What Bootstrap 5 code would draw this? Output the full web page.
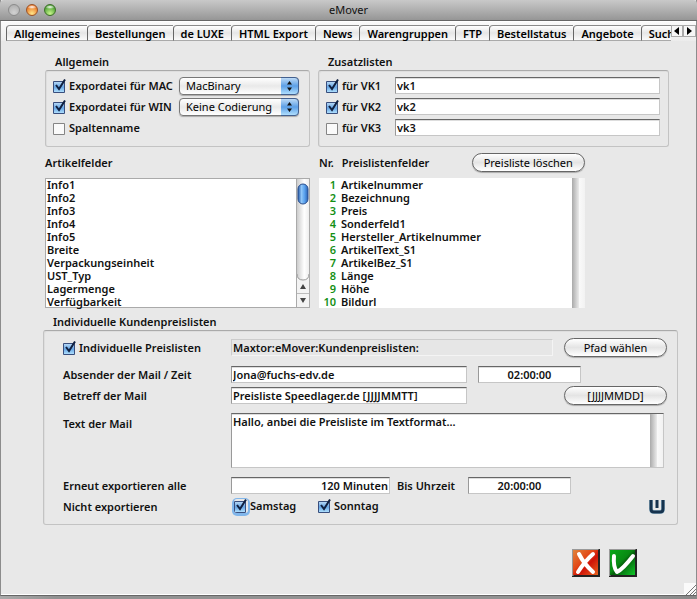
<!DOCTYPE html>
<html lang="de">
<head>
<meta charset="utf-8">
<meta name="viewport" content="width=device-width, initial-scale=1">
<title>eMover</title>
<link href="https://cdn.jsdelivr.net/npm/bootstrap@5.3.0/dist/css/bootstrap.min.css" rel="stylesheet">
<style>
body { font: 600 11px/13px "Noto Sans", "Open Sans", sans-serif; color: #111; background: linear-gradient(90deg, #aaa, #929292 8%, #929292 92%, #888); min-height: 100vh; }
button, input, select, textarea { font: inherit; color: inherit; }
h2, label { font: inherit; margin: 0; white-space: nowrap; }
label { padding-left: 2px; }
.app-window { background: #e8e8e8; border: 1px solid #8c8c8c; border-top: 0; border-bottom-color: #666; min-height: calc(100vh - 3px); box-shadow: inset 0 -1px #fff; }
.title-bar { height: 21px; margin: 0 -1px; background: linear-gradient(#c9c9c9, #969696); border-bottom: 1px solid #666; border-radius: 4px 4px 0 0; padding-left: 8px; }
.title-bar h1 { font: 400 11px/20px "Noto Sans", sans-serif; margin: 0; padding-right: 56px; }
.lamps { gap: 6px; }
.lamp { width: 12px; height: 12px; padding: 0; border: 1px solid #8b8b8b; border-radius: 50%; background: radial-gradient(circle at 50% 75%, #d2d2d2, #a9a9a9); }
.lamp-min { border-color: #9b5226; background: radial-gradient(ellipse 5px 2px at 50% 20%, #fff, transparent), radial-gradient(circle at 50% 85%, #ffe78a, #e97525 75%); }
.lamp-max { border-color: #3d6e28; background: radial-gradient(ellipse 5px 2px at 50% 20%, #fff, transparent), radial-gradient(circle at 50% 85%, #c8f58c, #4a9e32 75%); }
.tab-strip { height: 20px; padding: 3px 0 0 5px; border-top: 1px solid #fff; background: linear-gradient(#fafafa, #ececec); }
.tab-strip .nav { overflow: hidden; min-width: 0; }
.tab-strip .nav-link { height: 16px; padding: 0 7px; line-height: 15px; color: #000; white-space: nowrap; border: 1px solid #8a8a8a; border-left-color: #666; border-bottom-color: #aaa; border-right: 0; border-radius: 4px 0 0 0; background: linear-gradient(#fff, #e6e6e6 50%, #fafafa); }
.scroll-btn { width: 13px; height: 12px; padding: 0; border: 1px solid #aaa; background: #f6f6f6; line-height: 0; }
.panes { padding: 14px 18px 0 42px; }
.sec-head { padding: 0 0 2px 10px; }
.upper, .lists { display: grid; grid-template-columns: 265fr 351fr; column-gap: 8px; margin: 0 9px 0 2px; }
.group-box { border: 1px solid #c3c3c3; border-top-color: #aaa; border-radius: 3px; box-shadow: inset 1px 1px #dedede; }
.small-group { height: 77px; padding: 4px 8px 0 7px; }
.opt-row { height: 21px; }
.tick { appearance: none; flex: none; width: 14px; height: 14px; margin: 0; background: url("data:image/svg+xml,%3Csvg xmlns='http://www.w3.org/2000/svg' viewBox='0 0 14 14'%3E%3Cpath d='M.5 2.5h11v11H.5z' fill='%23fafafa' stroke='%23858585'/%3E%3C/svg%3E") center/contain no-repeat; }
.tick:checked { background-image: url("data:image/svg+xml,%3Csvg xmlns='http://www.w3.org/2000/svg' viewBox='0 0 14 14'%3E%3Cdefs%3E%3ClinearGradient id='a' x2='0' y2='1'%3E%3Cstop stop-color='%23bcdcf7'/%3E%3Cstop offset='.5' stop-color='%2365a5e5'/%3E%3Cstop offset='1' stop-color='%23b5e4ff'/%3E%3C/linearGradient%3E%3C/defs%3E%3Cpath d='M.5 2.5h11v11H.5z' fill='url(%23a)' stroke='%23394e7d'/%3E%3Cpath d='m3 6 3 4 6-9.500' fill='none' stroke='%23102040' stroke-width='2'/%3E%3C/svg%3E"); }
.tick-focus { border-radius: 3px; box-shadow: 0 1px 0 2px #80b6eb; }
.mac-select { position: relative; width: 120px; margin-right: 2px; }
.mac-select select { appearance: none; width: 100%; height: 18px; padding: 0 22px 0 6px; font-weight: 400; line-height: 15px; color: #000; border: 1px solid #777; border-radius: 4px; background: linear-gradient(#fff, #e9e9e9 50%, #fff); box-shadow: 0 1px 1px #aaa; }
.mac-select svg { position: absolute; right: 0; top: 0; pointer-events: none; }
.vk-name { width: 55px; flex: none; }
.field { height: 17px; min-width: 0; padding: 0 1px; line-height: 14px; border: 1px solid #c6c6c6; border-top-color: #666; border-left-color: #999; border-radius: 0; background: #fff; box-shadow: inset 0 1px #ddd; }
.field-path { background: #e6e6e6; border-color: #ccc; border-bottom-color: #f4f4f4; border-right-color: #f4f4f4; box-shadow: none; }
.pill { height: 19px; padding: 0 11px; font-weight: 400; line-height: 16px; color: #000; white-space: nowrap; border: 1px solid #666; border-radius: 10px; background: linear-gradient(#fff, #e4e4e4 50%, #fff); box-shadow: 0 1px 1px #aaa; }
.pill-fixed { width: 103px; flex: none; padding: 0; margin-left: 11px; }
.date-btn { margin-left: 97px; }
.list-head { height: 31px; }
.list-pane { height: 130px; background: #fff; }
.list-left { box-shadow: inset 0 0 0 1px #aaa; }
.list-left li { padding-left: 2px; }
.v-scroll { width: 14px; line-height: 0; border: 1px solid #aaa; background: linear-gradient(90deg, #ccc, #fff 60%, #eee); }
.price-table td { padding: 0; }
.price-table td:first-child { width: 22px; padding-right: 5px; text-align: right; color: #149014; }
.idle-scroll { width: 13px; flex: none; background: linear-gradient(90deg, #aaa, #e6e6e6 50%, #fafafa 51%, #f2f2f2); }
.right-list { width: 76%; padding-left: 1px; }
.sub-section { padding-top: 7px; }
.mail-group { padding: 7px 10px 9px 19px; }
.mail-row { min-height: 18px; margin-bottom: 8px; }
.mail-row.tight { margin-bottom: 3px; }
.mail-row:last-child { margin-bottom: 0; }
.row-name { width: 168px; flex: none; padding: 0; }
.time-field { width: 103px; flex: none; text-align: center; }
.mail-time { margin: 0 86px 0 11px; }
.until-time { margin-right: 96px; }
.until-name { width: 78px; flex: none; padding-left: 7px; }
.mail-text { height: 55px; padding: 0; margin-right: 3px; }
.mail-text textarea { resize: none; border: 0; padding: 1px; background: transparent; height: 52px; overflow: hidden; min-width: 0; outline: 0; }
.day-box { width: 84px; padding-left: 3px; }
.img-btn { width: 28px; height: 28px; padding: 0; border: 0; background: none; line-height: 0; }
.actions { padding: 24px 41px 0 0; gap: 9px; }
.grip { line-height: 0; }
</style>
<script src="https://cdn.jsdelivr.net/npm/bootstrap@5.3.0/dist/js/bootstrap.bundle.min.js"></script>
</head>
<body>
<div class="app-window d-flex flex-column">
  <header class="title-bar d-flex align-items-center">
    <div class="lamps d-flex">
      <button class="lamp" aria-label="Schließen"></button>
      <button class="lamp lamp-min" aria-label="Minimieren"></button>
      <button class="lamp lamp-max" aria-label="Maximieren"></button>
    </div>
    <h1 class="flex-fill text-center">eMover</h1>
  </header>
  <div class="tab-strip d-flex">
    <nav class="nav flex-nowrap flex-fill">
      <a class="nav-link active" href="#">Allgemeines</a>
      <a class="nav-link" href="#">Bestellungen</a>
      <a class="nav-link" href="#">de LUXE</a>
      <a class="nav-link" href="#">HTML Export</a>
      <a class="nav-link" href="#">News</a>
      <a class="nav-link" href="#">Warengruppen</a>
      <a class="nav-link" href="#">FTP</a>
      <a class="nav-link" href="#">Bestellstatus</a>
      <a class="nav-link" href="#">Angebote</a>
      <a class="nav-link" href="#">Suche</a>
    </nav>
    <button class="scroll-btn" aria-label="Zurück"><svg width="9" height="10"><path d="M7 1v8L2 5z"/></svg></button>
    <button class="scroll-btn" aria-label="Weiter"><svg width="9" height="10"><path d="M2 1v8l5-4z"/></svg></button>
  </div>

  <main class="panes">
    <div class="upper">
      <section>
        <h2 class="sec-head">Allgemein</h2>
        <div class="group-box small-group">
          <div class="opt-row d-flex align-items-center">
            <input class="tick" type="checkbox" id="mac" checked><label class="flex-fill" for="mac">Expordatei für MAC</label>
            <div class="mac-select"><select aria-label="Format MAC"><option>MacBinary</option></select><svg width="18" height="18"><use href="#cap"/></svg></div>
          </div>
          <div class="opt-row d-flex align-items-center">
            <input class="tick" type="checkbox" id="win" checked><label class="flex-fill" for="win">Expordatei für WIN</label>
            <div class="mac-select"><select aria-label="Format WIN"><option>Keine Codierung</option></select><svg width="18" height="18"><use href="#cap"/></svg></div>
          </div>
          <div class="opt-row d-flex align-items-center">
            <input class="tick" type="checkbox" id="spalten"><label for="spalten">Spaltenname</label>
          </div>
        </div>
      </section>
      <section>
        <h2 class="sec-head">Zusatzlisten</h2>
        <div class="group-box small-group">
          <div class="opt-row d-flex align-items-center">
            <input class="tick" type="checkbox" id="vk1" checked><label class="vk-name" for="vk1">für VK1</label>
            <input class="field flex-fill" type="text" value="vk1" aria-label="Name VK1">
          </div>
          <div class="opt-row d-flex align-items-center">
            <input class="tick" type="checkbox" id="vk2" checked><label class="vk-name" for="vk2">für VK2</label>
            <input class="field flex-fill" type="text" value="vk2" aria-label="Name VK2">
          </div>
          <div class="opt-row d-flex align-items-center">
            <input class="tick" type="checkbox" id="vk3"><label class="vk-name" for="vk3">für VK3</label>
            <input class="field flex-fill" type="text" value="vk3" aria-label="Name VK3">
          </div>
        </div>
      </section>
    </div>

    <div class="lists">
      <section>
        <div class="list-head d-flex align-items-center"><h2>Artikelfelder</h2></div>
        <div class="list-pane list-left d-flex">
          <ul class="list-unstyled flex-fill m-0">
            <li>Info1</li><li>Info2</li><li>Info3</li><li>Info4</li><li>Info5</li><li>Breite</li><li>Verpackungseinheit</li><li>UST_Typ</li><li>Lagermenge</li><li>Verfügbarkeit</li>
          </ul>
          <div class="v-scroll">
            <svg width="12" height="128">
              <defs><linearGradient id="blue"><stop stop-color="#2459a8"/><stop offset=".35" stop-color="#8fc6f8"/><stop offset=".65" stop-color="#5aa2ee"/><stop offset="1" stop-color="#2a62b4"/></linearGradient></defs>
              <rect x="1" y="5" width="10" height="20" rx="5" fill="url(#blue)" stroke="#2b4e8c"/>
              <path d="M0 95q0 6 6 6t6-6v33H0z" fill="#f3f3f3"/><path d="M0 95q0 6 6 6t6-6" fill="none" stroke="#999"/>
              <path d="M0 114.500h12" stroke="#bbb"/><path d="M3 110h6l-3-5zM3 119h6l-3 5z" fill="#444"/>
            </svg>
          </div>
        </div>
      </section>
      <section class="right-list">
        <div class="list-head d-flex align-items-center"><h2>Nr.</h2><h2 class="ps-2">Preislistenfelder</h2><button class="pill ms-auto">Preisliste löschen</button></div>
        <div class="list-pane d-flex">
          <div class="flex-fill">
            <table class="price-table w-100" aria-label="Preislistenfelder">
              <tbody>
              <tr><td>1</td><td>Artikelnummer</td></tr>
              <tr><td>2</td><td>Bezeichnung</td></tr>
              <tr><td>3</td><td>Preis</td></tr>
              <tr><td>4</td><td>Sonderfeld1</td></tr>
              <tr><td>5</td><td>Hersteller_Artikelnummer</td></tr>
              <tr><td>6</td><td>ArtikelText_S1</td></tr>
              <tr><td>7</td><td>ArtikelBez_S1</td></tr>
              <tr><td>8</td><td>Länge</td></tr>
              <tr><td>9</td><td>Höhe</td></tr>
              <tr><td>10</td><td>Bildurl</td></tr>
              </tbody>
            </table>
          </div>
          <div class="idle-scroll"></div>
        </div>
      </section>
    </div>

    <section class="sub-section">
      <h2 class="sec-head">Individuelle Kundenpreislisten</h2>
      <div class="group-box mail-group">
        <div class="mail-row d-flex align-items-center">
          <div class="row-name d-flex"><input class="tick" type="checkbox" id="indiv" checked><label for="indiv">Individuelle Preislisten</label></div>
          <input class="field field-path flex-fill" type="text" value="Maxtor:eMover:Kundenpreislisten:" aria-label="Pfad" readonly>
          <button class="pill pill-fixed">Pfad wählen</button>
        </div>
        <div class="mail-row tight d-flex align-items-center">
          <label class="row-name" for="absender">Absender der Mail / Zeit</label>
          <input class="field flex-fill" type="text" id="absender" value="Jona@fuchs-edv.de">
          <input class="field time-field mail-time" type="text" value="02:00:00" aria-label="Zeit">
        </div>
        <div class="mail-row d-flex align-items-center">
          <label class="row-name" for="betreff">Betreff der Mail</label>
          <input class="field flex-fill" type="text" id="betreff" value="Preisliste Speedlager.de [JJJJMMTT]">
          <button class="pill pill-fixed date-btn">[JJJJMMDD]</button>
        </div>
        <div class="mail-row d-flex">
          <label class="row-name pt-1" for="mailtext">Text der Mail</label>
          <div class="field mail-text flex-fill d-flex"><textarea class="flex-fill" id="mailtext">Hallo, anbei die Preisliste im Textformat...</textarea><div class="idle-scroll"></div></div>
        </div>
        <div class="mail-row tight d-flex align-items-center">
          <label class="row-name" for="erneut">Erneut exportieren alle</label>
          <input class="field flex-fill text-end" type="text" id="erneut" value="120 Minuten">
          <label class="until-name" for="bis">Bis Uhrzeit</label>
          <input class="field time-field until-time" type="text" id="bis" value="20:00:00">
        </div>
        <div class="mail-row d-flex align-items-center">
          <div class="row-name">Nicht exportieren</div>
          <div class="d-flex day-box"><input class="tick tick-focus" type="checkbox" id="sa" checked><label for="sa">Samstag</label></div>
          <div class="d-flex day-box"><input class="tick" type="checkbox" id="so" checked><label for="so">Sonntag</label></div>
          <svg class="ms-auto" width="18" height="15"><path d="M2 1v9q0 3 3 3h6q3 0 3-3V1" fill="none" stroke="#9fc0d2" stroke-width="4"/><path d="M2 1v9q0 3 3 3h6q3 0 3-3V1M8 1v8" fill="none" stroke="#17334e" stroke-width="3"/></svg>
        </div>
      </div>
    </section>
    <div class="actions d-flex justify-content-end">
      <button class="img-btn" aria-label="Abbrechen"><svg width="28" height="28"><defs><linearGradient id="r" x2="1" y2="1"><stop stop-color="#e0843c"/><stop offset=".4" stop-color="#e24a18"/><stop offset=".6" stop-color="#d01408"/><stop offset="1" stop-color="#e8641e"/></linearGradient></defs><path d="M0 0h28v28H0z" fill="#222"/><path d="M0 0h27L1 27H0z" fill="#999"/><path d="M1 1h25v25H1z" fill="url(#r)"/><path d="M7 5q5 10 14 18M21 5Q13 12 6 23" fill="none" stroke="#fff" stroke-width="4" stroke-linecap="round"/></svg></button>
      <button class="img-btn" aria-label="Bestätigen"><svg width="28" height="28"><defs><linearGradient id="g" x2="1" y2="1"><stop stop-color="#0aa81a"/><stop offset=".45" stop-color="#078a12"/><stop offset=".55" stop-color="#045c0a"/><stop offset="1" stop-color="#10c828"/></linearGradient></defs><path d="M0 0h28v28H0z" fill="#222"/><path d="M0 0h27L1 27H0z" fill="#999"/><path d="M1 1h25v25H1z" fill="url(#g)"/><path d="M5 7q-1 11 3 16Q14 20 24 7" fill="none" stroke="#fff" stroke-width="4" stroke-linecap="round" stroke-linejoin="round"/></svg></button>
    </div>
  </main>
  <div class="grip mt-auto text-end"><svg width="12" height="12"><path d="M0 0h12v12H0z" fill="#fafafa"/><path d="M2 12 12 2M6 12l6-6M9 12l3-3" stroke="#777"/></svg></div>
</div>
<svg class="position-absolute" width="0" height="0" aria-hidden="true"><defs><linearGradient id="capfill" x2="0" y2="1"><stop stop-color="#c3def7"/><stop offset=".5" stop-color="#5c9fe6"/><stop offset="1" stop-color="#b4e2ff"/></linearGradient></defs>
<symbol id="cap" viewBox="0 0 18 18"><path d="M0 .5h14q3.500 0 3.500 3.500v10q0 3.500-3.500 3.500H0z" fill="url(#capfill)"/><path d="M0 .5h14q3.500 0 3.500 3.500v10q0 3.500-3.500 3.500H0" fill="none" stroke="#43608f"/><path d="M6 7.500h5L8.500 4zM6 10.500h5L8.500 14z" fill="#111"/></symbol></svg>
</body>
</html>
